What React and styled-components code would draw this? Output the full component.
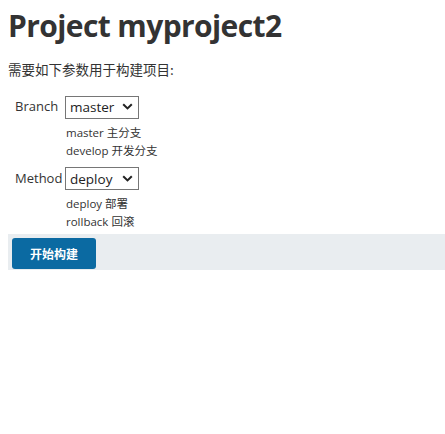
import React, { useState } from "react";
import styled, { createGlobalStyle } from "styled-components";

const GlobalStyle = createGlobalStyle`
  body {
    margin: 0;
    background: #fff;
    font-family: "Segoe UI", "Open Sans", "Noto Sans CJK SC", sans-serif;
    color: #333;
  }
`;

const Page = styled.div`
  padding: 0 0 0 8px;
`;

const Title = styled.h1`
  margin: 0;
  padding-top: 6px;
  font-size: 30px;
  line-height: 40px;
  font-weight: 700;
  color: #333;
  letter-spacing: -0.6px;
`;

const Intro = styled.p`
  margin: 14px 0 17px;
  font-size: 13.5px;
  line-height: 18px;
  font-family: "Noto Sans CJK SC", sans-serif;
`;

const ParamTable = styled.div`
  display: grid;
  grid-template-columns: 57px 1fr;
  row-gap: 7px;
`;

const Label = styled.div`
  padding-left: 7px;
  font-size: 13px;
  line-height: 22px;
  color: #333;
`;

const Main = styled.div`
  display: flex;
  flex-direction: column;
  align-items: flex-start;
`;

const SelectWrap = styled.span`
  position: relative;
  display: inline-block;
`;

const Select = styled.select`
  appearance: none;
  width: 74px;
  height: 23px;
  border: 1px solid #767676;
  border-radius: 0;
  background: #fff;
  padding: 0 0 0 4px;
  font-family: "Open Sans", sans-serif;
  font-size: 13.5px;
  color: #222;
  outline: none;
`;

const Chevron = styled.svg`
  position: absolute;
  right: 6px;
  top: 8px;
  pointer-events: none;
`;

const Help = styled.div`
  margin-top: 5px;
  padding-left: 1px;
  font-size: 11.5px;
  line-height: 18px;
  color: #333;
  font-family: "Open Sans", "Noto Sans CJK SC", sans-serif;
`;

const BottomBar = styled.div`
  box-sizing: border-box;
  margin-top: 3px;
  background: #e9edf0;
  padding: 4px 4px 0;
  height: 36px;
`;

const BuildButton = styled.button`
  width: 84px;
  height: 31px;
  border: none;
  border-radius: 3px;
  background: #0b6aa2;
  color: #fff;
  font-weight: 700;
  font-size: 12px;
  font-family: "Noto Sans CJK SC", sans-serif;
`;

const params = [
  { name: "Branch", options: ["master", "develop"], help: ["master 主分支", "develop 开发分支"] },
  { name: "Method", options: ["deploy", "rollback"], help: ["deploy 部署", "rollback 回滚"] },
];

const ChevronIcon = () => (
  <Chevron width="11" height="7" viewBox="0 0 11 7">
    <path d="M1.2 1.2 L5.5 5.4 L9.8 1.2" fill="none" stroke="#222" strokeWidth="2" />
  </Chevron>
);

export default function App() {
  const [values, setValues] = useState({ Branch: "master", Method: "deploy" });

  return (
    <Page>
      <GlobalStyle />
      <Title>Project myproject2</Title>
      <Intro>需要如下参数用于构建项目:</Intro>
      <ParamTable>
        {params.map((p) => (
          <React.Fragment key={p.name}>
            <Label>{p.name}</Label>
            <Main>
              <SelectWrap>
                <Select
                  value={values[p.name]}
                  onChange={(e) => setValues({ ...values, [p.name]: e.target.value })}
                >
                  {p.options.map((o) => (
                    <option key={o}>{o}</option>
                  ))}
                </Select>
                <ChevronIcon />
              </SelectWrap>
              <Help>
                {p.help.map((h) => (
                  <div key={h}>{h}</div>
                ))}
              </Help>
            </Main>
          </React.Fragment>
        ))}
      </ParamTable>
      <BottomBar>
        <BuildButton>开始构建</BuildButton>
      </BottomBar>
    </Page>
  );
}
